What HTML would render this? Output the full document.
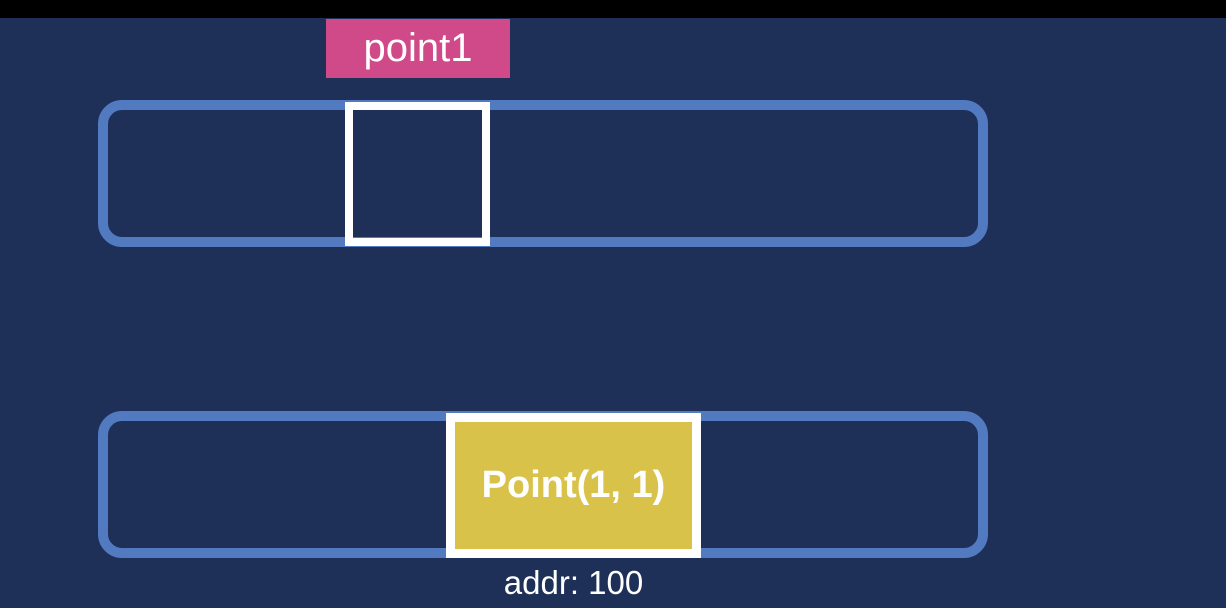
<!DOCTYPE html>
<html><head><style>
body{margin:0;width:1226px;height:608px;background:#1e3058;position:relative;overflow:hidden;font-family:"Liberation Sans",sans-serif}
div{position:absolute;box-sizing:border-box}
</style></head><body>
<div style="left:0;top:0;width:1226px;height:18px;background:#000"></div>
<div style="left:326px;top:19px;width:184px;height:59px;background:#d04a8a;color:#fff;font-size:40px;text-align:center;line-height:58px">point1</div>
<div style="left:98px;top:100px;width:890px;height:147px;border:10px solid #517ac0;border-radius:24px"></div>
<div style="left:345px;top:102px;width:145px;height:144px;border:8px solid #fff"></div>
<div style="left:98px;top:411px;width:890px;height:147px;border:10px solid #517ac0;border-radius:24px"></div>
<div style="left:446px;top:413px;width:255px;height:145px;border:9px solid #fff;background:#d9c24a;color:#fff;font-weight:bold;font-size:38px;text-align:center;line-height:127px">Point(1, 1)</div>
<div style="left:446px;top:562px;width:255px;color:#fff;font-size:33px;text-align:center;line-height:42px">addr: 100</div>
</body></html>
